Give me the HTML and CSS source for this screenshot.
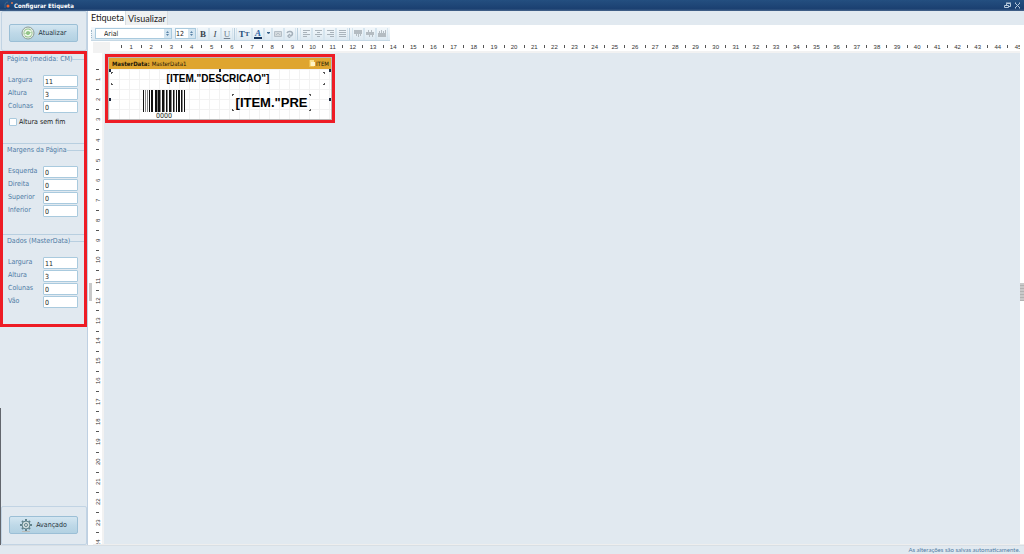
FILE: index.html
```html
<!DOCTYPE html>
<html lang="pt-BR">
<head>
    <meta charset="UTF-8">
    <meta name="viewport" content="width=device-width, initial-scale=1.0">
    <title>Configurar Etiqueta</title>
    <link rel="stylesheet" href="styles.css">
</head>
<body>
    <header class="titlebar">
        <svg class="app-icon" width="10" height="10" viewBox="0 0 10 10">
            <path d="M1 7V3a3 3 0 0 1 3-2M2 9h4" fill="none" stroke="#3d668f"/>
            <circle cx="4" cy="5" r="1.5" fill="#f0642c"/>
            <circle cx="8" cy="2" r="1" fill="#e07850"/>
        </svg>
        <h1>Configurar Etiqueta</h1>
        <button class="win-button" aria-label="Restaurar">
            <svg width="7" height="7" viewBox="0 0 7 7" fill="none" stroke="#b5c8da"><path d="M2.5 3V1.5h4v3H5M2 1h5"/><path d="M.5 3.5h4v2h-4z"/></svg>
        </button>
        <button class="win-button" aria-label="Fechar">
            <svg width="7" height="7" viewBox="0 0 7 7" stroke="#b5c8da"><path d="M1 1l5 5M6 1L1 6M1 1h1M5 1h1M1 6h1M5 6h1"/></svg>
        </button>
    </header>

    <div class="workspace">
        <aside class="sidebar">
            <div class="panel panel-top">
                <button class="action">
                    <svg width="14" height="14" viewBox="0 0 14 14">
                        <circle cx="7" cy="7" r="6" fill="#e9eeea" stroke="#8b9d95"/>
                        <circle cx="7" cy="7" r="4.5" fill="#93c588"/>
                        <path d="M4 7.5A3 3 0 0 1 9 5M10 6.500A3 3 0 0 1 5 9" fill="none" stroke="#f1f7ee" stroke-width="1.5"/>
                        <path d="M8 6h2.500V3.500zM6 8H3.500v2.500z" fill="#f1f7ee"/>
                    </svg>
                    <span>Atualizar</span>
                </button>
            </div>

            <form class="settings highlight">
                <fieldset>
                    <legend>Página (medida: CM)</legend>
                    <div class="fields">
                        <label for="pg-largura">Largura</label><input type="text" id="pg-largura" value="11">
                        <label for="pg-altura">Altura</label><input type="text" id="pg-altura" value="3">
                        <label for="pg-colunas">Colunas</label><input type="text" id="pg-colunas" value="0">
                    </div>
                    <label class="check"><input type="checkbox"> Altura sem fim</label>
                </fieldset>
                <fieldset>
                    <legend>Margens da Página</legend>
                    <div class="fields">
                        <label for="mg-esquerda">Esquerda</label><input type="text" id="mg-esquerda" value="0">
                        <label for="mg-direita">Direita</label><input type="text" id="mg-direita" value="0">
                        <label for="mg-superior">Superior</label><input type="text" id="mg-superior" value="0">
                        <label for="mg-inferior">Inferior</label><input type="text" id="mg-inferior" value="0">
                    </div>
                </fieldset>
                <fieldset>
                    <legend>Dados (MasterData)</legend>
                    <div class="fields">
                        <label for="md-largura">Largura</label><input type="text" id="md-largura" value="11">
                        <label for="md-altura">Altura</label><input type="text" id="md-altura" value="3">
                        <label for="md-colunas">Colunas</label><input type="text" id="md-colunas" value="0">
                        <label for="md-vao">Vão</label><input type="text" id="md-vao" value="0">
                    </div>
                </fieldset>
            </form>

            <div class="panel panel-bottom">
                <button class="action">
                    <svg width="12" height="13" viewBox="0 0 12 13" fill="none">
                        <path d="M2 12.500h8" stroke="#b9bbb8"/>
                        <path d="M6 0v12M0 6h12M2 2l8 8M10 2l-8 8" stroke="#60828b" stroke-width="2"/>
                        <circle cx="6" cy="6" r="4" fill="#cfdcdc" stroke="#60848d"/>
                        <circle cx="6" cy="6" r="1.500" fill="#eee" stroke="#60848d"/>
                    </svg>
                    <span>Avançado</span>
                </button>
            </div>
        </aside>

        <div class="splitter"></div>

        <main class="designer">
            <nav class="tabs">
                <a class="tab active" href="#etiqueta">Etiqueta</a>
                <a class="tab" href="#visualizar">Visualizar</a>
            </nav>

            <div class="toolbar-row">
                <div class="toolbar">
                    <span class="grip"></span>
                    <span class="combo combo-font">
                        <select aria-label="Fonte"><option>Arial</option></select>
                        <svg width="5" height="7" viewBox="0 0 5 7" fill="#5b83a8"><path d="M1 3h3L2.500 1zM1 4h3L2.500 6z"/></svg>
                    </span>
                    <span class="combo combo-size">
                        <select aria-label="Tamanho"><option>12</option></select>
                        <svg width="5" height="7" viewBox="0 0 5 7" fill="#5b83a8"><path d="M1 3h3L2.500 1zM1 4h3L2.500 6z"/></svg>
                    </span>
                    <div class="tools">
                        <button class="tool"><b>B</b></button>
                        <button class="tool"><i>I</i></button>
                        <button class="tool underline">U</button>
                    </div>
                    <div class="tools">
                        <button class="tool tt">T<small>T</small></button>
                        <button class="tool color"><i>A</i></button>
                        <button class="tool caret" aria-label="Cor"><svg width="5" height="3" viewBox="0 0 5 3"><path d="M1 0h3v1L2.500 2 1 1z" fill="#39648c"/></svg></button>
                        <button class="tool" aria-label="Realce"><svg width="8" height="8" viewBox="0 0 8 8" fill="#d3d9dd" stroke="#b4bec6"><path d="M.5 1.500h7v5h-7zM2 5l2-2 2 2"/></svg></button>
                        <button class="tool" aria-label="Girar"><svg width="8" height="8" viewBox="0 0 8 8" fill="none" stroke="#a4b0ba" stroke-width="1.500"><path d="M1 3a2.800 2.300 0 1 1 3 3M4 4L2 6l2 2"/></svg></button>
                    </div>
                    <div class="tools">
                        <button class="tool" aria-label="Esquerda"><svg width="7" height="7" viewBox="0 0 7 7" stroke="#a9b3bb"><path d="M0 .5h7M0 2.500h4M0 4.500h7M0 6.500h4"/></svg></button>
                        <button class="tool" aria-label="Centro"><svg width="7" height="7" viewBox="0 0 7 7" stroke="#a9b3bb"><path d="M0 .5h7M2 2.500h3M0 4.500h7M2 6.500h3"/></svg></button>
                        <button class="tool" aria-label="Direita"><svg width="7" height="7" viewBox="0 0 7 7" stroke="#a9b3bb"><path d="M0 .5h7M3 2.500h4M0 4.500h7M3 6.500h4"/></svg></button>
                        <button class="tool" aria-label="Justificar"><svg width="7" height="7" viewBox="0 0 7 7" stroke="#a9b3bb"><path d="M0 .5h7M0 2.500h7M0 4.500h7M0 6.500h7"/></svg></button>
                    </div>
                    <div class="tools">
                        <button class="tool" aria-label="Topo"><svg width="8" height="7" viewBox="0 0 8 7" fill="#b4bcc2"><path d="M0 0h8v4H7v2H6V4H5v3H4V4H3v2H2V4H0z"/></svg></button>
                        <button class="tool" aria-label="Meio"><svg width="8" height="7" viewBox="0 0 8 7" fill="#b4bcc2"><path d="M0 2h2V0h1v2h2V0h1v2h2v3H7v2H6V5H4v2H3V5H0z"/></svg></button>
                        <button class="tool" aria-label="Base"><svg width="8" height="7" viewBox="0 0 8 7" fill="#b4bcc2"><path d="M0 3h1V1h1v2h1V0h1v3h1V1h1v2h1V0h1v7H0z"/></svg></button>
                    </div>
                </div>
            </div>

            <div class="ruler-top"><div class="scale" data-count="45"></div></div>

            <div class="stage">
                <div class="ruler-left"><div class="scale" data-count="24"></div></div>
                <section class="canvas">
                    <div class="band highlight">
                        <div class="band-title">
                            <b>MasterData:</b> <span>MasterData1</span>
                            <span class="dataset">
                                <svg width="6" height="7" viewBox="0 0 6 7"><path d="M0 0h5v7H0z" fill="#f9e08a"/><path d="M2 2h4v4H2z" fill="#fff3c4"/><path d="M0 6.500h5M.5 0v7" stroke="#eebd4a"/></svg>
                                ITEM
                            </span>
                        </div>
                        <div class="band-body">
                            <i class="handle handle-tl"></i><i class="handle handle-tc"></i><i class="handle handle-tr"></i>
                            <i class="handle handle-ml"></i><i class="handle handle-mr"></i>
                            <div class="memo memo-name">[ITEM."DESCRICAO"]<i class="corners"></i></div>
                            <div class="barcode">
                                <svg width="42" height="22" viewBox="0 0 42 22">
                                    <path fill="#111" d="M0 0h1v22H0zM6 0h1v22H6zM8 0h2v22H8zM12 0h2v22h-2zM15 0h2v22h-2zM19 0h2v22h-2zM23 0h1v22h-1zM26 0h2v22h-2zM30 0h1v22h-1zM33 0h1v22h-1zM35 0h2v22h-2zM38 0h1v22h-1zM41 0h1v22h-1z"/>
                                    <path fill="#888" d="M2 0h1v22H2zM4 0h1v22H4zM14 0h1v22h-1zM17 0h1v22h-1zM21 0h1v22h-1zM24 0h1v22h-1zM28 0h1v22h-1zM31 0h1v22h-1zM39 0h1v22h-1z"/>
                                </svg>
                                <span>0000</span>
                            </div>
                            <div class="memo memo-price">[ITEM."PRE<i class="corners"></i></div>
                        </div>
                    </div>
                </section>
                <div class="edge"><span class="edge-grip"></span></div>
            </div>
        </main>
    </div>

    <footer class="statusbar">As alterações são salvas automaticamente.</footer>

    <script>
        // Monta as réguas: um traço de meio centímetro e o número de cada centímetro
        document.querySelectorAll('.scale').forEach(function(scale) {
            for (let i = 1; i <= Number(scale.dataset.count); i++) {
                const tick = document.createElement('i');
                const number = document.createElement('span');
                number.textContent = i;
                scale.append(tick, number);
            }
        });
    </script>
</body>
</html>
```
FILE: styles.css
```css
* {
    box-sizing: border-box;
}

body {
    margin: 0;
    min-height: 100vh;
    display: flex;
    flex-direction: column;
    background: #e1e9f0;
    color: #222;
    font-family: "DejaVu Sans Condensed", "DejaVu Sans", sans-serif;
    font-size: 7px;
    overflow: hidden;
}

button,
input,
select {
    font: inherit;
    color: inherit;
    margin: 0;
    padding: 0;
}

svg {
    display: block;
    flex: none;
}

.highlight {
    border: 3px solid #ee1c25;
}

/* Barra de título */
.titlebar {
    display: flex;
    align-items: center;
    height: 11px;
    padding: 0 3px 0 4px;
    background: linear-gradient(#244f80, #1b4071 80%, #47658c);
    color: #fff;
}

.titlebar h1 {
    flex: 1;
    margin: 0;
    font-size: 6px;
    line-height: 10px;
    font-weight: bold;
}

.win-button {
    margin-left: 3px;
    border: 0;
    background: none;
}

.workspace {
    flex: 1;
    display: flex;
    min-height: 0;
}

/* Painel lateral */
.sidebar {
    display: flex;
    flex-direction: column;
    width: 87px;
    flex: none;
    background: linear-gradient(#e1e9f0 397px, #62666d 397px) no-repeat left / 1px 100%;
}

.panel {
    height: 39px;
    margin: 0 0 0 1px;
    padding: 9px 8px 10px 7px;
    border: 1px solid #c2d4e4;
    border-radius: 2px;
}

.panel-top {
    height: 40px;
    padding-top: 12px;
}

.panel-bottom {
    margin-top: auto;
}

.action {
    display: flex;
    align-items: center;
    justify-content: center;
    gap: 4px;
    width: 100%;
    height: 18px;
    border: 1px solid #9bbfd6;
    border-radius: 2px;
    background: linear-gradient(#d3e6f1, #bfd9e8 50%, #b2d1e2);
    color: #26323c;
}

/* Grupos de medidas */
.settings {
    height: 276px;
    display: grid;
    grid-template-rows: 89px 91px 90px;
}

fieldset {
    display: flow-root;
    margin: 0;
    padding: 0;
    border: 0;
    border-top: 1px solid #b8cfe0;
    min-width: 0;
}

fieldset:first-child {
    border-top: 0;
}

legend {
    float: left;
    display: flex;
    width: 100%;
    margin: 0;
    padding: 1px 0 0 4px;
    color: #4f7ba5;
    line-height: 10px;
    white-space: nowrap;
}

fieldset:first-child legend {
    padding-top: 0;
}

legend::after {
    content: "";
    flex: 1;
    height: 1px;
    margin-top: 5px;
    background: #b8cfe0;
}

.fields {
    clear: both;
    display: grid;
    grid-template-columns: 35px 35px;
    grid-auto-rows: 12px;
    row-gap: 1px;
    padding: 11px 0 0 5px;
    color: #4f7ba5;
}

.fields label {
    line-height: 10px;
}

.fields input {
    width: 35px;
    height: 12px;
    padding: 1px 0 0 1px;
    border: 1px solid #a9cade;
    border-radius: 1px;
    background: #fff;
    color: #222;
}

.check {
    display: flex;
    align-items: center;
    gap: 2px;
    margin: 5px 0 0 6px;
    line-height: 8px;
}

.check input {
    appearance: none;
    width: 8px;
    height: 8px;
    border: 1px solid #a9cade;
    border-radius: 1px;
    background: #fff;
}

.splitter {
    width: 6px;
    flex: none;
    border-left: 1px solid #bfd0e2;
    background: linear-gradient(#c9c9c9, #c9c9c9) no-repeat 1px 272px / 3px 18px #fff;
}

/* Área do editor */
.designer {
    flex: 1;
    min-width: 0;
    display: flex;
    flex-direction: column;
    background: #fff;
    border-bottom: 1px solid #eee;
}

.tabs {
    display: flex;
    height: 14px;
    margin-left: -5px;
    background: #e1e9f0;
    font-family: Lato, "Noto Sans", sans-serif;
    font-size: 9px;
    line-height: 14px;
}

.tab {
    padding: 1px 1px 0 2px;
    background: #eef0f1;
    border-right: 1px solid #d9dde0;
    color: #222;
    text-decoration: none;
}

.tab.active {
    padding-left: 3px;
    background: #fff;
    line-height: 12px;
}

.toolbar-row {
    height: 17px;
    padding-top: 2px;
}

.toolbar {
    display: flex;
    align-items: center;
    width: max-content;
    height: 14px;
    margin-left: -2px;
    padding-right: 1px;
    background: linear-gradient(#f5f9fc, #dbe8f1);
    border-bottom: 1px solid #c5d8e5;
}

.grip {
    width: 2px;
    height: 8px;
    margin-right: 2px;
    border-left: 1px dotted #9db7c9;
}

.combo {
    display: flex;
    align-items: center;
    height: 11px;
    margin-right: 3px;
    border: 1px solid #a9cade;
    background: #fff;
}

.combo svg {
    padding: 0 1px;
    width: 7px;
    height: 9px;
    background: #d5e6f1;
}

.combo select {
    appearance: none;
    flex: 1;
    min-width: 0;
    height: 9px;
    padding-top: 1px;
    border: 0;
    background: none;
    line-height: 8px;
}

.combo-font {
    width: 77px;
}

.combo-font select {
    padding-left: 8px;
}

.combo-size {
    width: 21px;
    margin-right: 0;
}

.tools {
    display: flex;
    padding: 0 1px;
    border-right: 1px solid #b9cedd;
}

.tools:nth-last-child(-n+2) {
    padding-left: 2px;
}

.tools:last-child {
    border-right: 0;
}

.tool {
    display: flex;
    align-items: center;
    justify-content: center;
    width: 12px;
    height: 12px;
    border: 1px solid #d6e5ef;
    border-width: 0 1px;
    background: none;
    font-family: "Liberation Serif", serif;
    font-size: 9px;
    line-height: 10px;
    color: #39434d;
}

.tool.underline {
    text-decoration: underline;
    color: #738290;
}

.tool.tt {
    width: 16px;
    color: #274f7b;
    font-weight: bold;
}

.tool.tt small {
    font-size: 7px;
}

.tool.color i {
    width: 8px;
    height: 10px;
    border-bottom: 2px solid #17345c;
    line-height: 8px;
    font-weight: bold;
    color: #2e63a4;
}

.tool.caret {
    width: 8px;
}

/* Réguas */
.ruler-top {
    height: 11px;
    margin-right: 4px;
    padding-left: 17px;
    background: #f2f2f2;
    overflow: hidden;
}

.ruler-top .scale {
    height: 9px;
    padding-left: 6px;
    margin-right: -3px;
    background: #fff;
}

.scale {
    display: flex;
    align-items: center;
    font-family: "Liberation Sans", sans-serif;
    font-size: 6px;
    line-height: 8px;
    color: #333;
}

.scale i,
.scale span {
    flex: 1 1 0;
    min-width: 0;
    min-height: 0;
    display: flex;
    align-items: center;
    justify-content: center;
}

.scale i::before {
    content: "";
    width: 1px;
    height: 3px;
    background: #555;
}

.stage {
    flex: 1;
    min-height: 0;
    display: flex;
}

.ruler-left {
    width: 11px;
    flex: none;
    display: flex;
    padding-top: 6px;
    border-right: 2px solid #f2f2f2;
    overflow: hidden;
}

.ruler-left .scale {
    width: 9px;
    flex-direction: column;
    margin-bottom: -4px;
    padding-top: 5px;
}

.ruler-left .scale i::before {
    width: 3px;
    height: 1px;
}

.ruler-left .scale span {
    writing-mode: vertical-rl;
    transform: rotate(180deg);
}

.canvas {
    flex: 1;
    min-width: 0;
    padding: 1px;
    background: #e1e9f0;
}

.edge {
    display: flex;
    align-items: center;
    width: 4px;
    flex: none;
    padding-bottom: 14px;
}

.edge-grip {
    width: 4px;
    height: 18px;
    background: repeating-linear-gradient(#c9c9c9 0 2px, #b2b2b2 2px 3px);
}

/* Banda da etiqueta */
.band {
    width: 230px;
    padding: 1px;
    background: #b9b9b9;
}

.band-title {
    display: flex;
    align-items: center;
    gap: 2px;
    height: 11px;
    padding: 0 2px 0 3px;
    background: #dfa52f;
    font-size: 6px;
    line-height: 10px;
    color: #1c1609;
}

.dataset {
    display: flex;
    align-items: center;
    gap: 1px;
    margin-left: auto;
}

.band-body {
    position: relative;
    height: 50px;
    overflow: hidden;
    background: #fff;
    background-image: linear-gradient(90deg, #f2f2f2 1px, transparent 1px), linear-gradient(#f2f2f2 1px, transparent 1px);
    background-size: 10px 10px;
}

.memo {
    position: absolute;
    font-family: "Liberation Sans", sans-serif;
    font-weight: bold;
    color: #000;
    text-align: center;
    white-space: nowrap;
}

.memo-name {
    left: 2px;
    top: 3px;
    width: 214px;
    height: 13px;
    font-size: 10px;
    line-height: 13px;
}

.memo-price {
    left: 123px;
    top: 25px;
    width: 79px;
    height: 17px;
    font-size: 13px;
    line-height: 18px;
}

/* Cantos do objeto de texto */
.corners {
    position: absolute;
    inset: 0;
    --c: linear-gradient(#555, #555) no-repeat;
    background:
        var(--c) 0 0 / 2px 1px, var(--c) 0 0 / 1px 2px,
        var(--c) 100% 0 / 2px 1px, var(--c) 100% 0 / 1px 2px,
        var(--c) 0 100% / 2px 1px, var(--c) 0 100% / 1px 2px,
        var(--c) 100% 100% / 2px 1px, var(--c) 100% 100% / 1px 2px;
}

.barcode {
    position: absolute;
    left: 34px;
    top: 21px;
    width: 42px;
    font-size: 7px;
    line-height: 8px;
    text-align: center;
    background: #fff;
}

.barcode span {
    display: block;
}

.handle {
    position: absolute;
    width: 2px;
    height: 3px;
    background: #1c2940;
}

.handle-tl { left: 0; top: 0; }
.handle-tc { left: 110px; top: 0; }
.handle-tr { right: 0; top: 0; }
.handle-ml { left: 0; top: 29px; }
.handle-mr { right: 0; top: 29px; }

.statusbar {
    height: 9px;
    padding-right: 4px;
    border-top: 1px solid #d8dfe5;
    color: #4f7ba5;
    font-family: Lato, "Noto Sans", sans-serif;
    font-size: 6px;
    line-height: 8px;
    text-align: right;
}
```
